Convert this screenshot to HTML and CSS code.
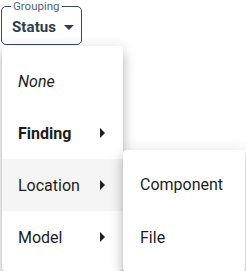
FILE: index.html
```html
<!DOCTYPE html>
<html>
<head>
<meta charset="utf-8">
<link rel="stylesheet" href="styles.css">
</head>
<body>
<fieldset class="field">
  <legend class="field-label">Grouping</legend>
  <div class="field-value">
    <span class="value-text">Status</span>
    <svg class="drop" viewBox="0 0 24 24" width="24" height="24"><path d="M7 10l5 5 5-5z"/></svg>
  </div>
</fieldset>

<ul class="menu main-menu">
  <li class="item"><span class="none">None</span></li>
  <li class="item"><span class="bold">Finding</span><svg class="arrow" viewBox="0 0 24 24" width="24" height="24"><path d="M10 17l5-5-5-5z"/></svg></li>
  <li class="item active"><span>Location</span><svg class="arrow" viewBox="0 0 24 24" width="24" height="24"><path d="M10 17l5-5-5-5z"/></svg></li>
  <li class="item"><span>Model</span><svg class="arrow" viewBox="0 0 24 24" width="24" height="24"><path d="M10 17l5-5-5-5z"/></svg></li>
</ul>

<ul class="menu sub-menu">
  <li class="item sub"><span>Component</span></li>
  <li class="item sub"><span>File</span></li>
</ul>
</body>
</html>
```
FILE: styles.css
```css
* { box-sizing: border-box; }
body {
  margin: 0;
  background: #fff;
  font-family: Roboto, "Liberation Sans", sans-serif;
  width: 246px;
  height: 271px;
  overflow: hidden;
  position: relative;
}
.field {
  margin: 0 0 0 1px;
  width: 81px;
  height: 45px;
  border: 1px solid #34495e;
  border-radius: 5px;
  padding: 0 0 0 10px;
  min-width: 0;
}
.field-label {
  font-size: 11.5px;
  line-height: 13px;
  color: #50667a;
  padding: 0 2px;
  margin-left: -1px;
}
.field-value {
  display: flex;
  align-items: center;
  height: 24px;
  margin-top: 2px;
}
.value-text {
  font-size: 15px;
  font-weight: 700;
  color: #2c3e50;
  letter-spacing: 0.1px;
}
.drop {
  fill: #2c3e50;
  margin-left: 1px;
}
.menu {
  list-style: none;
  margin: 0;
  position: absolute;
  background: #fff;
  border-radius: 4px;
  box-shadow: 0 5px 5px -3px rgba(0,0,0,0.2), 0 8px 10px 1px rgba(0,0,0,0.14), 0 3px 14px 2px rgba(0,0,0,0.12);
}
.main-menu {
  left: 2px;
  top: 46px;
  width: 121px;
  padding: 9px 0 8px;
}
.sub-menu {
  left: 123px;
  top: 150px;
  width: 122px;
  padding: 8px 0;
}
.item {
  display: flex;
  align-items: center;
  height: 52px;
  padding: 0 0 0 16px;
  font-size: 16px;
  color: #1d1d1d;
}
.item.sub { height: 53px; padding-left: 17px; }
.item.active { background: #f5f5f5; }
.item span { flex: 1; }
.none { font-style: italic; }
.bold { font-weight: 700; }
.arrow {
  fill: #1d1d1d;
  margin-right: 9px;
}
```
